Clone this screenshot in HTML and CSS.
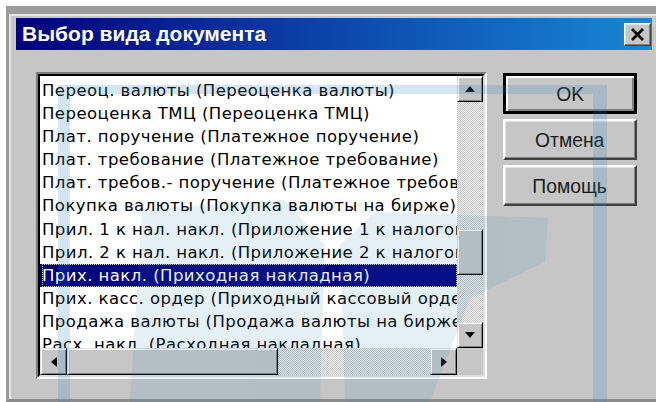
FILE: index.html
```html
<!DOCTYPE html>
<html lang="ru">
<head>
<meta charset="utf-8">
<title>Выбор вида документа</title>
<link rel="stylesheet" href="styles.css">
</head>
<body>
<div class="dialog">
  <div class="titlebar">
    <span class="title">Выбор вида документа</span>
    <button class="close" type="button" aria-label="Закрыть">
      <svg width="15" height="13" viewBox="0 0 15 13"><path d="M2 1 L13 12 M13 1 L2 12" stroke="#000" stroke-width="2.8" fill="none"/></svg>
    </button>
  </div>
  <div class="content">
    <div class="listbox">
      <div class="listbox-inner">
        <ul class="items">
          <li>Переоц. валюты (Переоценка валюты)</li>
          <li>Переоценка ТМЦ (Переоценка ТМЦ)</li>
          <li>Плат. поручение (Платежное поручение)</li>
          <li>Плат. требование (Платежное требование)</li>
          <li>Плат. требов.- поручение (Платежное требование-поручение)</li>
          <li>Покупка валюты (Покупка валюты на бирже)</li>
          <li>Прил. 1 к нал. накл. (Приложение 1 к налоговой накладной)</li>
          <li>Прил. 2 к нал. накл. (Приложение 2 к налоговой накладной)</li>
          <li class="selected"><span class="focus">Прих. накл. (Приходная накладная)</span></li>
          <li>Прих. касс. ордер (Приходный кассовый ордер)</li>
          <li>Продажа валюты (Продажа валюты на бирже)</li>
          <li>Расх. накл. (Расходная накладная)</li>
        </ul>
        <div class="vscroll">
          <div class="sbtn">
            <svg width="10" height="6" viewBox="0 0 10 6"><polygon points="5,0 10,6 0,6" fill="#000"/></svg>
          </div>
          <div class="track vtrack"><div class="thumb vthumb"></div></div>
          <div class="sbtn">
            <svg width="10" height="6" viewBox="0 0 10 6"><polygon points="0,0 10,0 5,6" fill="#000"/></svg>
          </div>
        </div>
        <div class="hscroll">
          <div class="sbtn">
            <svg width="6" height="10" viewBox="0 0 6 10"><polygon points="6,0 6,10 0,5" fill="#000"/></svg>
          </div>
          <div class="track htrack"><div class="thumb hthumb"></div></div>
          <div class="sbtn">
            <svg width="6" height="10" viewBox="0 0 6 10"><polygon points="0,0 6,5 0,10" fill="#000"/></svg>
          </div>
        </div>
        <div class="corner"></div>
      </div>
    </div>
    <div class="actions">
      <button class="btn default" type="button"><span class="label">OK</span></button>
      <button class="btn" type="button"><span class="label">Отмена</span></button>
      <button class="btn" type="button"><span class="label">Помощь</span></button>
    </div>
  </div>
</div>
<!-- translucent logo stamped over the page -->
<svg class="watermark" width="656" height="402" viewBox="0 0 656 402">
  <g fill="#2f86bd" opacity="0.2">
    <rect x="58" y="85" width="12" height="317"/>
    <rect x="70" y="85" width="537" height="9"/>
    <rect x="593" y="94" width="14" height="308"/>
  </g>
  <g fill="#2f86bd" opacity="0.12">
    <polygon points="130,402 142,210 285,200 325,245 320,402"/>
    <polygon points="340,245 375,212 548,218 545,262 470,298 430,402 345,402"/>
  </g>
</svg>
</body>
</html>
```

FILE: styles.css
```css
html, body {
  margin: 0;
  padding: 0;
}

body {
  background: #ffffff;
  width: 656px;
  height: 402px;
  overflow: hidden;
  position: relative;
  font-family: "DejaVu Sans", "Liberation Sans", sans-serif;
}

.dialog {
  margin: 6px 0 0 6px;
  width: 650px;
  height: 396px;
  box-sizing: border-box;
  background: #c6c6c6;
  border-top: 8px solid #9c9c9c;
  border-left: 3px solid #9c9c9c;
  border-bottom: 3px solid #8c8c8c;
  box-shadow: inset 2px 2px 0 #e6e6e6;
  padding: 4px 4px 0 7px;
}

.titlebar {
  height: 32px;
  display: flex;
  align-items: center;
  justify-content: space-between;
  background: linear-gradient(to right, #00007e 0%, #0a3fa6 45%, #1888d2 100%);
}

.title {
  padding-left: 6px;
  color: #ffffff;
  font-family: "Liberation Sans", Arial, sans-serif;
  font-weight: bold;
  font-size: 21px;
  white-space: nowrap;
}

.close {
  width: 27px;
  height: 23px;
  margin-right: 1px;
  padding: 0;
  display: flex;
  align-items: center;
  justify-content: center;
  background: #c6c6c6;
  border: 1px solid;
  border-color: #ffffff #404040 #404040 #ffffff;
  box-shadow: inset -1px -1px 0 #808080, inset 1px 1px 0 #e0e0e0;
}

.content {
  display: flex;
  align-items: flex-start;
  margin-top: 22px;
  padding-left: 20px;
}

.listbox {
  width: 451px;
  height: 307px;
  box-sizing: border-box;
  border: 2px solid;
  border-color: #7c7c7c #ffffff #ffffff #7c7c7c;
}

.listbox-inner {
  height: 100%;
  box-sizing: border-box;
  border: 2px solid;
  border-color: #000000 #dcdcdc #dcdcdc #000000;
  background: #ffffff;
  display: grid;
  grid-template-columns: 1fr 26px;
  grid-template-rows: 1fr 27px;
}

.items {
  list-style: none;
  margin: 0;
  padding: 3px 0 0 0;
  overflow: hidden;
  font-size: 16.5px;
  letter-spacing: 0.45px;
  color: #000000;
}

.items li {
  height: 23.1px;
  line-height: 23.1px;
  padding-left: 2px;
  white-space: nowrap;
}

.items li.selected {
  background: #000080;
  color: #ffffff;
}

.focus {
  display: block;
  height: 100%;
  box-sizing: border-box;
  outline: 1px dotted #d8d860;
  outline-offset: -1px;
}

.vscroll {
  display: flex;
  flex-direction: column;
}

.hscroll {
  display: flex;
}

.sbtn {
  flex: none;
  width: 26px;
  height: 26px;
  box-sizing: border-box;
  display: flex;
  align-items: center;
  justify-content: center;
  background: #c6c6c6;
  border: 1px solid;
  border-color: #e0e0e0 #000000 #000000 #e0e0e0;
  box-shadow: inset 1px 1px 0 #ffffff, inset -1px -1px 0 #808080;
}

.hscroll .sbtn {
  width: 27px;
  height: 27px;
}

.track {
  flex: 1;
  position: relative;
  background: repeating-conic-gradient(#c4c4c4 0 25%, #f2f2f2 0 50%) 0 0 / 2px 2px;
}

.vtrack {
  display: flex;
  flex-direction: column;
  padding-top: 127px;
}

.htrack {
  display: flex;
}

.thumb {
  box-sizing: border-box;
  background: #c6c6c6;
  border: 1px solid;
  border-color: #e0e0e0 #000000 #000000 #e0e0e0;
  box-shadow: inset 1px 1px 0 #ffffff, inset -1px -1px 0 #808080;
}

.vthumb {
  height: 46px;
}

.hthumb {
  width: 211px;
}

.corner {
  background: #c6c6c6;
}

.actions {
  display: flex;
  flex-direction: column;
  gap: 5px;
  margin-left: 16px;
  margin-top: 1px;
}

.btn {
  width: 134px;
  height: 41px;
  padding: 0;
  background: #c6c6c6;
  font-family: "Liberation Sans", Arial, sans-serif;
  font-size: 21px;
  color: #1a1a1a;
  border: 2px solid;
  border-color: #ffffff #404040 #404040 #ffffff;
  box-shadow: inset -1px -1px 0 #808080, inset 1px 1px 0 #e0e0e0;
}

.btn .label {
  display: inline-block;
  transform: scaleX(0.92);
}

.btn.default {
  border-width: 3px;
  border-color: #000000;
  box-shadow: inset 2px 2px 0 #ffffff, inset -2px -2px 0 #808080;
}

.watermark {
  position: absolute;
  left: 0;
  top: 0;
  pointer-events: none;
}
```
